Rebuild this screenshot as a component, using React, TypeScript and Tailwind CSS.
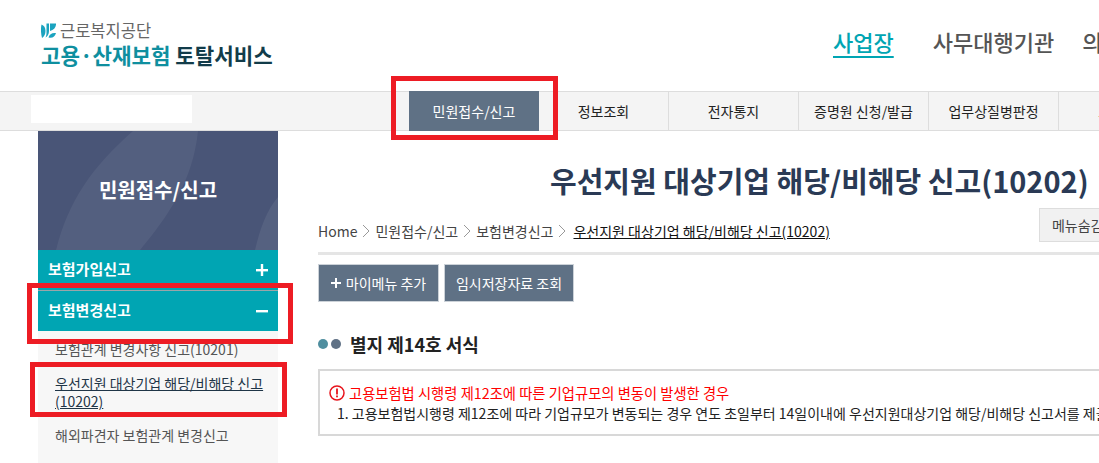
const FONT = "font-['Malgun_Gothic','Noto_Sans_CJK_KR',sans-serif]";

const NAV = ["정보조회", "전자통지", "증명원 신청/발급", "업무상질병판정"];

const CRUMBS = ["Home", "민원접수/신고", "보험변경신고"];

function Chevron() {
  return (
    <svg width="8" height="14" viewBox="0 0 8 14" fill="none" stroke="#999" strokeWidth="1" className="mx-[5px]">
      <path d="M1 1l6 6-6 6" />
    </svg>
  );
}

function Logo() {
  return (
    <div className="ml-[41px] pt-[20px]">
      <div className="flex items-center h-[21px]">
        <svg width="15" height="15" viewBox="0 0 15 15" className="mr-[4px]">
          <path d="M0.5 1.5c2.5 1 4 3 4 6.5 0 3-1.200 5.500-3.500 7C0 11-.5 6 .5 1.500z" fill="#1ba3bf" />
          <path d="M5.500 0.500h2.500v7.500c0 3-1.500 5.500-3.500 6.500 1-2 1-4 1-6z" fill="#1ba3bf" />
          <path d="M9 0.500h6c0.300 3.500-2 6.500-6 7.500zM7.500 14.500c1-3.500 3.500-5 7.500-4.500-1 3.500-3.500 5.500-7.500 4.500z" fill="#1ba3bf" />
        </svg>
        <span className="text-[16.5px] leading-none text-[#666]">근로복지공단</span>
      </div>
      <div className="mt-[1px] text-[21.2px] leading-[26px] font-bold whitespace-nowrap">
        <span className="text-[#0f8f9f]">고용·산재보험</span>
        <span className="text-[#123c4a]"> 토탈서비스</span>
      </div>
    </div>
  );
}

function SideHead({ label, open }: { label: string; open?: boolean }) {
  return (
    <div className="h-[40px] bg-[#00a5b3] flex items-center justify-between px-[10px] pb-[1px] text-white text-[15px] font-bold">
      <span>{label}</span>
      <svg width="12" height="12" viewBox="0 0 12 12" fill="#fff">
        <rect x="0" y="5" width="12" height="2.4" />
        {!open && <rect x="4.8" y="0" width="2.4" height="12" />}
      </svg>
    </div>
  );
}

export default function App() {
  return (
    <div className={`${FONT} relative w-[1099px] h-[463px] overflow-hidden bg-white`}>
      {/* top header */}
      <header className="h-[91px] flex justify-between">
        <Logo />
        <div className="flex items-start pt-[26px] text-[22px] leading-[30px] font-medium whitespace-nowrap w-[266px]">
          <span className="text-[#00a5b3] underline decoration-2 underline-offset-[5px]">사업장</span>
          <span className="ml-[39px] text-[#555]">사무대행기관</span>
          <span className="ml-[28px] text-[#555]">의료기관</span>
        </div>
      </header>

      {/* main nav */}
      <nav className="h-[40px] bg-[#f4f4f4] border-y border-[#ddd] flex items-stretch">
        <div className="ml-[31px] mt-[3px] w-[161px] h-[28px] shrink-0 bg-white" />
        <div className="ml-[217px] -my-px w-[130px] shrink-0 bg-[#5f7185] text-white text-[14px] flex items-center justify-center">
          민원접수/신고
        </div>
        {NAV.map((n) => (
          <div key={n} className="w-[130px] shrink-0 border-r border-[#ddd] text-[14px] text-[#222] flex items-center justify-center">
            {n}
          </div>
        ))}
        <div className="w-[130px] shrink-0 text-[14px] text-[#222] flex items-center justify-center">보험사무</div>
      </nav>

      <div className="flex">
        {/* sidebar */}
        <aside className="ml-[38px] w-[240px] shrink-0">
          <div className="relative h-[119px] bg-[#495577] flex items-center justify-center pb-[2px] overflow-hidden text-white text-[20px] font-bold">
            <svg className="absolute inset-0" width="240" height="119" viewBox="0 0 240 119">
              <path d="M18 119C30 70 55 35 95 0H160C155 50 130 85 102 119z" fill="#fff" opacity="0.06" />
              <path d="M240 66C228 80 222 98 217 119h23z" fill="#fff" opacity="0.07" />
            </svg>
            <span className="relative">민원접수/신고</span>
          </div>
          <SideHead label="보험가입신고" />
          <div className="h-px bg-[#9aa5a8]" />
          <SideHead label="보험변경신고" open />
          <div className="bg-[#f7f7f7] h-[200px] pl-[17px] pr-[10px] text-[14px] leading-[18px] text-[#555]">
            <p className="pt-[9px] whitespace-nowrap">보험관계 변경사항 신고(10201)</p>
            <p className="mt-[16px] text-[#1f3547] underline">우선지원 대상기업 해당/비해당 신고 (10202)</p>
            <p className="mt-[16px] whitespace-nowrap">해외파견자 보험관계 변경신고</p>
          </div>
        </aside>

        {/* content */}
        <main className="ml-[40px] w-[1000px] shrink-0">
          <h1 className="pt-[31px] pl-[232px] text-[29px] leading-[36px] font-bold text-[#2a3a55] whitespace-nowrap">
            우선지원 대상기업 해당/비해당 신고(10202)
          </h1>
          <div className="flex items-center h-[50px] mt-[7px] border-b-[3px] border-[#e5e5e5]">
            <div className="flex items-center pt-[5px] text-[14px] text-[#444] whitespace-nowrap">
              {CRUMBS.map((c) => (
                <span key={c} className="flex items-center">
                  {c}
                  <Chevron />
                </span>
              ))}
              <span className="ml-[2px] text-[#111] underline">우선지원 대상기업 해당/비해당 신고(10202)</span>
            </div>
            <div className="ml-[209px] mb-[7px] h-[34px] w-[90px] pl-[12px] bg-[#f1f1f1] border border-[#ddd] text-[14px] text-[#444] flex items-center whitespace-nowrap">
              메뉴숨김
            </div>
          </div>
          <div className="flex gap-[5px] mt-[9px]">
            <div className="h-[38px] w-[121px] bg-[#5f7185] border border-[#ccd2d8] text-white text-[14px] flex items-center justify-center gap-[5px] whitespace-nowrap">
              <svg width="10" height="10" viewBox="0 0 10 10" fill="#fff">
                <rect x="0" y="4" width="10" height="2" />
                <rect x="4" y="0" width="2" height="10" />
              </svg>
              마이메뉴 추가
            </div>
            <div className="h-[38px] w-[130px] bg-[#5f7185] border border-[#ccd2d8] text-white text-[14px] flex items-center justify-center whitespace-nowrap">
              임시저장자료 조회
            </div>
          </div>
          <div className="flex items-center mt-[29px] h-[26px]">
            <span className="w-[10px] h-[10px] rounded-full bg-[#4f8e9f]" />
            <span className="ml-[3px] w-[10px] h-[10px] rounded-full bg-[#5f7185]" />
            <span className="ml-[9px] text-[18px] font-bold text-[#222]">별지 제14호 서식</span>
          </div>
          <div className="mt-[12px] h-[67px] border-2 border-[#d8d8d8] pl-[9px] pt-[11px] leading-[21px] whitespace-nowrap">
            <div className="flex items-center text-[14.3px] text-[#ff0000]">
              <svg width="16" height="16" viewBox="0 0 16 16" className="mr-[4px]">
                <circle cx="8" cy="8" r="7" fill="none" stroke="#e8141c" strokeWidth="1.5" />
                <rect x="7.1" y="3.500" width="1.8" height="6" fill="#e8141c" />
                <rect x="7.1" y="10.500" width="1.8" height="1.8" fill="#e8141c" />
              </svg>
              고용보험법 시행령 제12조에 따른 기업규모의 변동이 발생한 경우
            </div>
            <div className="pl-[8px] text-[14px] text-[#222]">
              1. 고용보험법시행령 제12조에 따라 기업규모가 변동되는 경우 연도 초일부터 14일이내에 우선지원대상기업 해당/비해당 신고서를 제출하여야 합니다.
            </div>
          </div>
        </main>
      </div>

      {/* red annotation boxes drawn over the screenshot */}
      <div className="absolute left-[391px] top-[76px] w-[167px] h-[64px] border-[5px] border-[#ed1c24]" />
      <div className="absolute left-[27px] top-[283px] w-[266px] h-[61px] border-[5px] border-[#ed1c24]" />
      <div className="absolute left-[30px] top-[362px] w-[257px] h-[55px] border-[5px] border-[#ed1c24]" />
    </div>
  );
}
